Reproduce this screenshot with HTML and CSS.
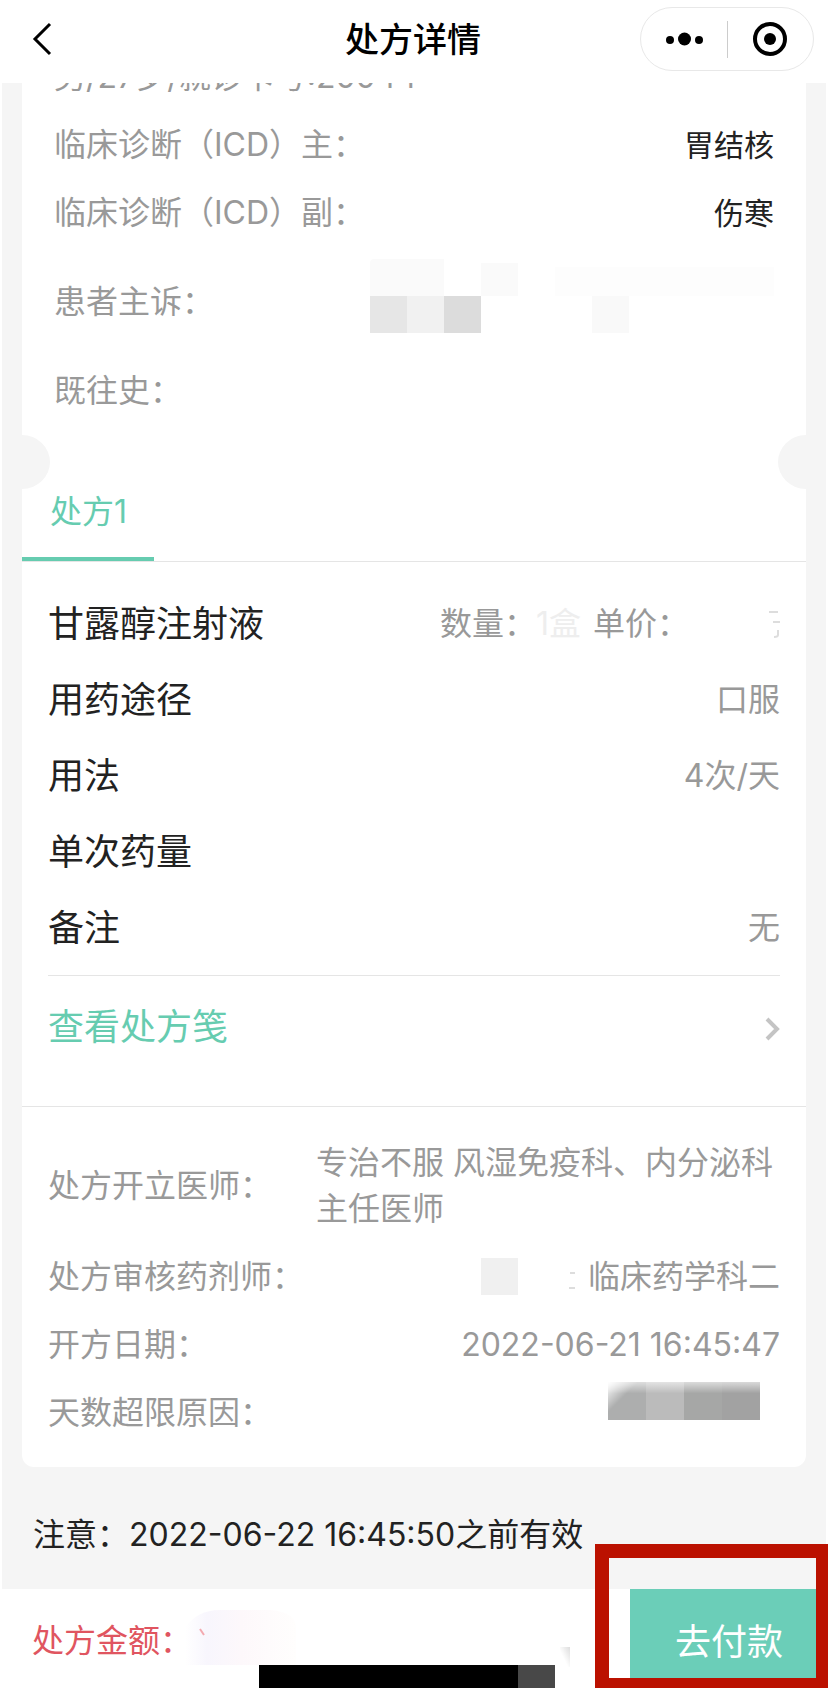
FILE: index.html
```html
<!DOCTYPE html>
<html lang="zh-CN">
<head>
<meta charset="utf-8">
<meta name="viewport" content="width=device-width">
<title>处方详情</title>
<link rel="stylesheet" href="styles.css">
</head>
<body>
<header class="nav">
  <button class="nav-back" aria-label="返回">
    <svg width="20" height="34" viewBox="0 0 20 34" fill="none" stroke="#000" stroke-width="3"><path d="M18 2 3 17l15 15"/></svg>
  </button>
  <h1 class="nav-title">处方详情</h1>
  <div class="capsule">
    <button class="capsule-btn" aria-label="更多">
      <svg width="38" height="16" viewBox="0 0 38 16"><circle cx="5" cy="9" r="4"/><circle cx="19.500" cy="8" r="6.500"/><circle cx="34" cy="9" r="4"/></svg>
    </button>
    <button class="capsule-btn capsule-close" aria-label="关闭">
      <svg width="36" height="36" viewBox="0 0 36 36"><circle cx="18" cy="18" r="15" fill="none" stroke="#000" stroke-width="4"/><circle cx="18" cy="18" r="6"/></svg>
    </button>
  </div>
</header>
<main class="page">
  <article class="card">
    <section class="patient">
      <div class="row"><span>男/27岁/就诊卡号:20044</span></div>
      <div class="row"><span>临床诊断（ICD）主：</span><span class="diagnosis">胃结核</span></div>
      <div class="row"><span>临床诊断（ICD）副：</span><span class="diagnosis">伤寒</span></div>
      <div class="row row-tall">
        <span>患者主诉：</span>
        <svg class="complaint-mask" width="404" height="74" viewBox="0 0 404 74">
          <path fill="#fafafa" d="M0 4q0-4 4-4h70v37H0zM111 4h37v33h-37z"/>
          <path fill="#fdfdfd" d="M185 8h219v29H185z"/>
          <path fill="#e6e6e6" d="M0 37h37v37H0z"/>
          <path fill="#f1f1f1" d="M37 37h37v37H37z"/>
          <path fill="#dcdcdc" d="M74 37h37v37H74z"/>
          <path fill="#f9f9f9" d="M222 37h37v37h-37z"/>
        </svg>
      </div>
      <div class="row"><span>既往史：</span></div>
    </section>
    <nav class="tabs"><button class="tab">处方1</button></nav>
    <section class="drug">
      <div class="drug-row">
        <h2 class="drug-label">甘露醇注射液</h2>
        <div class="drug-price">
          <span>数量：</span><span class="faded">1盒</span>
          <span class="unit">单价：</span>
          <svg width="16" height="32" viewBox="0 0 16 32" fill="none" stroke="#ddd" stroke-width="2"><path d="M5 4h9M9 14h7M14 22v5q0 2-4 2"/></svg>
        </div>
      </div>
      <div class="drug-row"><span class="drug-label">用药途径</span><span>口服</span></div>
      <div class="drug-row"><span class="drug-label">用法</span><span>4次/天</span></div>
      <div class="drug-row"><span class="drug-label">单次药量</span></div>
      <div class="drug-row"><span class="drug-label">备注</span><span>无</span></div>
    </section>
    <a class="sheet-link" href="#">查看处方笺
      <svg class="arrow" width="16" height="24" viewBox="0 0 16 24" fill="none" stroke="#c4c4c4" stroke-width="4"><path d="m3 2 10 10L3 22"/></svg>
    </a>
    <section class="info">
      <div class="doctor"><span>处方开立医师：</span><span class="doctor-name">专治不服 风湿免疫科、内分泌科 主任医师</span></div>
      <div class="info-row">
        <span>处方审核药剂师：</span>
        <div class="pharmacist">
          <svg width="95" height="38" viewBox="0 0 95 38"><path fill="#f0f0f0" d="M0 0h37v37H0z"/><path stroke="#ddd" stroke-width="2" d="M89 15h5M88 30h6"/></svg>
          <span>临床药学科二</span>
        </div>
      </div>
      <div class="info-row"><span>开方日期：</span><time>2022-06-21 16:45:47</time></div>
      <div class="info-row">
        <span>天数超限原因：</span>
        <svg class="reason-mask" width="152" height="38" viewBox="0 0 152 38">
          <defs>
            <linearGradient id="fade" x2="0" y2="1"><stop stop-color="#fff" stop-opacity=".6"/><stop offset=".3" stop-color="#fff" stop-opacity="0"/></linearGradient>
            <linearGradient id="corner" x2=".4" y2=".4"><stop stop-color="#fff"/><stop offset="1" stop-color="#fff" stop-opacity="0"/></linearGradient>
          </defs>
          <path fill="#adaeae" d="M0 0h38v38H0z"/><path fill="#bbb" d="M38 0h38v38H38z"/>
          <path fill="#a6a7a6" d="M76 0h38v38H76z"/><path fill="#a2a2a2" d="M114 0h38v38h-38z"/>
          <path fill="url(#fade)" d="M0 0h152v38H0z"/><path fill="url(#corner)" d="M0 0h38v38H0z"/>
        </svg>
      </div>
    </section>
  </article>
  <p class="notice">注意：2022-06-22 16:45:50之前有效</p>
</main>
<footer class="pay-bar">
  <span class="amount">处方金额：</span>
  <svg class="amount-mask" width="386" height="78" viewBox="0 0 386 78">
    <defs><linearGradient id="tint"><stop stop-color="#fff"/><stop offset=".2" stop-color="#f8f6fd"/><stop offset=".5" stop-color="#fdf8fb"/><stop offset="1" stop-color="#fffefd"/></linearGradient>
    <linearGradient id="edge" x1="1" x2="0" y2="1"><stop stop-color="#ddd"/><stop offset=".6" stop-color="#fff"/></linearGradient></defs>
    <path fill="url(#tint)" d="M0 55V18Q12 0 35 0h50q26 2 26 18v37z"/>
    <path stroke="#f3a9b0" stroke-width="2" d="m15 19 4 6"/>
    <path fill="url(#edge)" d="M375 37h10v20h-10z"/>
    <path d="M74 55h259v23H74z"/><path fill="#484848" d="M333 55h37v23h-37z"/>
  </svg>
  <button class="pay">去付款</button>
  <div class="highlight"></div>
</footer>
</body>
</html>
```
FILE: styles.css
```css
* {
  box-sizing: border-box;
}

body {
  margin: 0;
  background: #fff;
  color: #999;
  font: 32px/46px Inter, "Noto Sans CJK SC", sans-serif;
}

h1,
h2,
p {
  margin: 0;
}

button {
  padding: 0;
  border: 0;
  background: none;
  font: inherit;
}

svg {
  display: block;
  flex: none;
}

.nav {
  position: relative;
  z-index: 1;
  display: grid;
  grid-template-columns: 1fr auto 1fr;
  align-items: center;
  height: 83px;
  padding: 0 14px 5px 32px;
  background: #fff;
}

.nav-back {
  justify-self: start;
}

.nav-title {
  padding: 2px 20px 0 0;
  color: #000;
  font-size: 34px;
  font-weight: 500;
}

.capsule {
  justify-self: end;
  display: flex;
  align-items: center;
  width: 174px;
  height: 64px;
  border: 1px solid #e8e8e8;
  border-radius: 32px;
}

.capsule-btn {
  flex: 1;
  display: flex;
  align-items: center;
  justify-content: center;
  height: 37px;
}

.capsule-close {
  border-left: 1px solid #ccc;
}

.page {
  margin: -40px 2px 0;
  padding: 0 20px;
  background: #f5f5f5;
}

.card {
  overflow: hidden;
  border-radius: 12px;
  background: #fff;
}

.patient {
  padding: 0 32px 35px;
}

.row,
.info-row,
.drug-row {
  display: flex;
  align-items: center;
  justify-content: space-between;
  height: 68px;
}

.row-tall {
  height: 110px;
}

.diagnosis {
  color: #222;
  font-size: 30px;
}

.complaint-mask {
  margin-bottom: 12px;
}

.tabs {
  position: relative;
  display: flex;
  height: 102px;
  border-bottom: 1px solid #e5e5e5;
}

.tabs::before,
.tabs::after {
  content: "";
  position: absolute;
  top: -25px;
  width: 56px;
  height: 54px;
  border-radius: 50%;
  background: #f5f5f5;
}

.tabs::before {
  left: -28px;
}

.tabs::after {
  right: -28px;
}

.tab {
  padding: 7px 27px 0 28px;
  border-bottom: 4px solid #66ccb0;
  color: #66ccb0;
}

.drug {
  margin: 0 26px;
  padding: 24px 0 9px;
  border-bottom: 1px solid #e5e5e5;
}

.drug-row {
  height: 76px;
}

.drug-label {
  color: #222;
  font-size: 36px;
  font-weight: inherit;
}

.drug-price {
  display: flex;
  align-items: center;
}

.faded {
  color: #eee;
}

.unit {
  margin: 0 75px 0 12px;
}

.sheet-link {
  display: flex;
  align-items: center;
  justify-content: space-between;
  height: 131px;
  padding: 0 26px 28px;
  border-bottom: 1px solid #e5e5e5;
  color: #66ccb0;
  font-size: 36px;
  text-decoration: none;
}

.arrow {
  margin-top: 3px;
}

.info {
  padding: 33px 26px 20px;
}

.doctor {
  display: flex;
  align-items: center;
  justify-content: space-between;
  margin-bottom: 11px;
}

.doctor-name {
  flex: 0 1 464px;
}

.pharmacist {
  display: flex;
  align-items: center;
  gap: 12px;
}

.reason-mask {
  margin: 0 20px 24px 0;
}

.notice {
  padding: 45px 11px 31px;
  color: #222;
}

.pay-bar {
  position: relative;
  display: flex;
  height: 99px;
  padding-left: 32px;
}

.amount {
  padding-top: 29px;
  color: #e05560;
  white-space: nowrap;
}

.amount-mask {
  align-self: flex-end;
  margin-left: -7px;
}

.pay {
  width: 198px;
  margin-left: auto;
  padding: 6px 0 0;
  background: #6bceb8;
  color: #fff;
  font-size: 36px;
}

.highlight {
  position: absolute;
  right: 0;
  bottom: 0;
  width: 233px;
  height: 144px;
  border: solid #bb1100;
  border-width: 14px 12px 10px 14px;
  pointer-events: none;
}
```
